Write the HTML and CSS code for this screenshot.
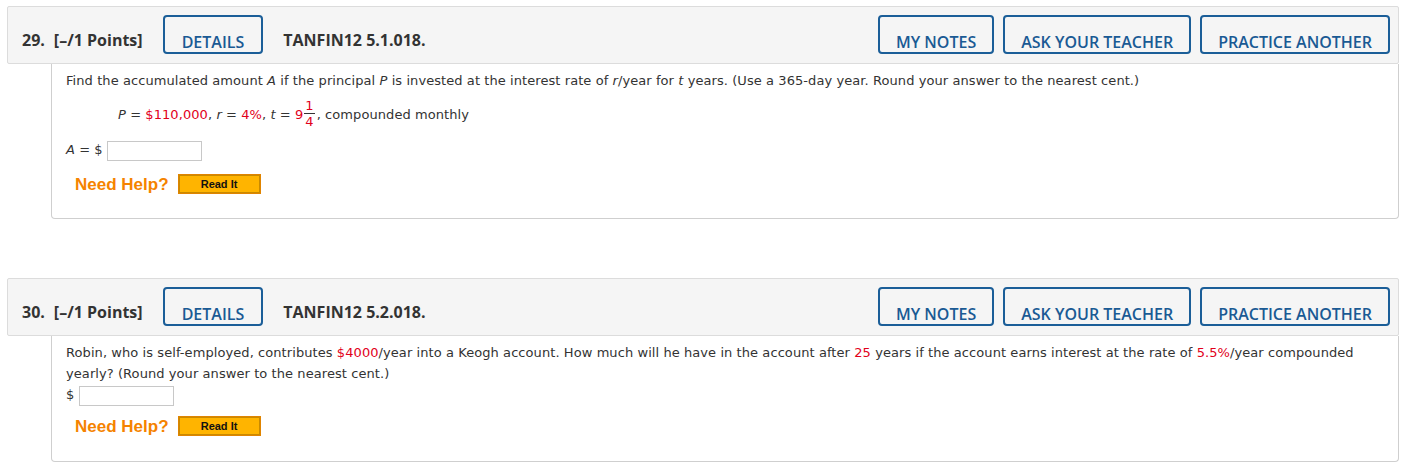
FILE: index.html
```html
<!DOCTYPE html>
<html>
<head>
<meta charset="utf-8">
<link rel="stylesheet" href="styles.css">
</head>
<body>
<div class="page">
  <section class="question q1">
    <div class="qhead">
      <span class="qnum">29.</span>
      <span class="qpts">[–/1 Points]</span>
      <button class="btn">DETAILS</button>
      <span class="qcode">TANFIN12 5.1.018.</span>
      <div class="spacer"></div>
      <button class="btn">MY NOTES</button>
      <button class="btn">ASK YOUR TEACHER</button>
      <button class="btn">PRACTICE ANOTHER</button>
    </div>
    <div class="qbody">
      <p class="line">Find the accumulated amount <i>A</i> if the principal <i>P</i> is invested at the interest rate of <i>r</i>/year for <i>t</i> years. (Use a 365-day year. Round your answer to the nearest cent.)</p>
      <p class="formula"><i>P</i> = <span class="red">$110,000</span>, <i>r</i> = <span class="red">4%</span>, <i>t</i> = <span class="red">9</span><span class="frac"><span class="num">1</span><span class="den">4</span></span>, compounded monthly</p>
      <p class="answer"><i>A</i> = $ <span class="input"></span></p>
      <div class="help"><span class="needhelp">Need Help?</span><button class="readit">Read It</button></div>
    </div>
  </section>

  <section class="question q2">
    <div class="qhead">
      <span class="qnum">30.</span>
      <span class="qpts">[–/1 Points]</span>
      <button class="btn">DETAILS</button>
      <span class="qcode">TANFIN12 5.2.018.</span>
      <div class="spacer"></div>
      <button class="btn">MY NOTES</button>
      <button class="btn">ASK YOUR TEACHER</button>
      <button class="btn">PRACTICE ANOTHER</button>
    </div>
    <div class="qbody">
      <p class="para">Robin, who is self-employed, contributes <span class="red">$4000</span>/year into a Keogh account. How much will he have in the account after <span class="red">25</span> years if the account earns interest at the rate of <span class="red">5.5%</span>/year compounded yearly? (Round your answer to the nearest cent.)<br>$ <span class="input"></span></p>
      <div class="help"><span class="needhelp">Need Help?</span><button class="readit">Read It</button></div>
    </div>
  </section>
</div>
</body>
</html>
```

FILE: styles.css
```css
* { box-sizing: border-box; }
html, body { margin: 0; padding: 0; background: #fff; }
body { font-family: "DejaVu Sans", Verdana, sans-serif; color: #333; }

.page {
  padding: 6px 8px 0 7px;
  display: flex;
  flex-direction: column;
  gap: 59px;
}

.qhead {
  height: 58px;
  background: #f5f5f5;
  border: 1px solid #dcdcdc;
  border-radius: 2px;
  display: flex;
  align-items: flex-start;
  padding: 8px 8px 0 14px;
  font-family: "Open Sans", sans-serif;
  font-weight: 700;
  font-size: 16px;
  color: #333;
}
.qnum, .qpts, .qcode {
  line-height: 20px;
  margin-top: 15px;
}
.qpts { margin-left: 9px; }
.qcode { margin-left: 20px; }
.spacer { flex: 1; }

.btn {
  height: 39px;
  margin-left: 20px;
  padding: 14px 16px 0;
  background: transparent;
  border: 2px solid #1b5e98;
  border-radius: 4px;
  font-family: "Open Sans", sans-serif;
  font-weight: 600;
  font-size: 16px;
  line-height: 20px;
  color: #1a5a94;
}
.qpts + .btn { padding: 14px 17px 0; }
.qcode + .spacer + .btn { margin-left: 0; }
.btn + .btn { margin-left: 9px; }

.qbody {
  margin-left: 44px;
  border: 1px solid #cfcfcf;
  border-top: none;
  border-radius: 0 0 4px 4px;
  padding: 6px 14px 0 14px;
  font-size: 13px;
  letter-spacing: 0.075px;
  line-height: 21px;
}
.q1 .qbody { height: 155px; }
.q2 .qbody { height: 126px; }

p { margin: 0; }
.red { color: #e2001a; }
i { font-style: italic; }

.formula {
  margin-top: 9px;
  padding-left: 52px;
  line-height: 20px;
}
.frac {
  display: inline-flex;
  flex-direction: column;
  vertical-align: middle;
  color: #e2001a;
  line-height: 15px;
  margin: 0 2px 0 1px;
  position: relative;
  top: -2px;
}
.frac .num { border-bottom: 1px solid #333; padding: 0 1px; text-align: center; }
.frac .den { text-align: center; }

.answer {
  margin-top: 9px;
  line-height: 20px;
}
.input {
  display: inline-block;
  width: 95px;
  height: 20px;
  border: 1px solid #c8c8c8;
  vertical-align: middle;
  background: #fff;
}

.help {
  display: flex;
  align-items: center;
  padding-left: 9px;
  margin-top: 13px;
}
.q2 .help { margin-top: 10px; }
.needhelp {
  font-family: "Liberation Sans", Arial, sans-serif;
  font-weight: 700;
  font-size: 17px;
  letter-spacing: 0;
  color: #f58300;
}
.readit {
  margin-left: 9px;
  width: 83px;
  height: 20px;
  padding: 0;
  background: #ffb400;
  border: 1px solid #e08400;
  box-shadow: inset 0 0 0 1px #c98a00;
  font-family: "Liberation Sans", Arial, sans-serif;
  font-weight: 700;
  font-size: 11px;
  letter-spacing: 0;
  color: #111;
}
```
